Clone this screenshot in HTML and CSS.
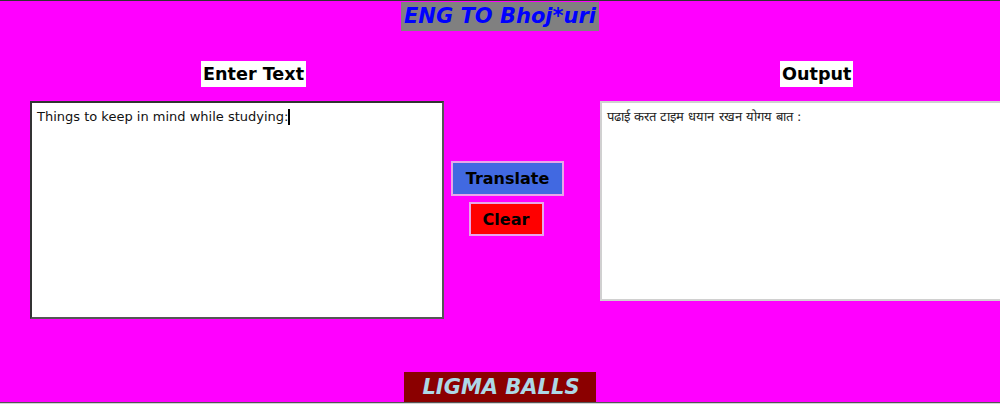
FILE: index.html
```html
<!DOCTYPE html>
<html lang="en">
<head>
<meta charset="utf-8">
<title>ENG TO Bhoj*uri</title>
<link rel="stylesheet" href="styles.css">
</head>
<body>
<div class="page">
  <header class="header">
    <h1 class="title">ENG TO Bhoj*uri</h1>
  </header>
  <div class="labels">
    <h2 class="label label-in">Enter Text</h2>
    <h2 class="label label-out">Output</h2>
  </div>
  <main class="row">
    <div class="input-box">Things to keep in mind while studying:<span class="caret"></span></div>
    <div class="buttons">
      <button class="btn btn-translate">Translate</button>
      <button class="btn btn-clear">Clear</button>
    </div>
    <div class="output-box">पढाई करत टाइम धयान रखन योगय बात :</div>
  </main>
  <footer class="footer">
    <p class="footer-text">LIGMA BALLS</p>
  </footer>
</div>
</body>
</html>
```
FILE: styles.css
```css
html {
  background: #d4d4d4;
}
body {
  margin: 0;
  font-family: "DejaVu Sans", sans-serif;
  overflow: hidden;
}
.page {
  background: #ff00ff;
  border-top: 1px solid #333;
  border-bottom: 1px solid #555;
  height: 401px;
  display: flex;
  flex-direction: column;
  overflow: hidden;
}
.header {
  display: flex;
  justify-content: center;
  padding-top: 1px;
}
.title {
  margin: 0;
  background: #808080;
  color: #0000ff;
  font-style: italic;
  font-weight: bold;
  font-size: 21px;
  line-height: 29px;
  padding: 0 3px;
}
.labels {
  display: flex;
  margin-top: 30px;
  padding-left: 201px;
}
.label {
  margin: 0;
  background: #ffffff;
  color: #000;
  font-size: 17.6px;
  font-weight: bold;
  line-height: 26px;
  padding: 0 2px;
}
.label-out {
  margin-left: 474px;
}
.row {
  display: flex;
  align-items: flex-start;
  margin-top: 14px;
  padding-left: 30px;
}
.input-box {
  box-sizing: border-box;
  width: 414px;
  height: 218px;
  background: #fff;
  border: 2px solid #333;
  border-right-color: #555;
  border-bottom-color: #555;
  padding: 5px 5px;
  font-size: 13px;
  line-height: 17px;
  color: #111;
  flex: none;
}
.caret {
  display: inline-block;
  width: 2px;
  height: 16px;
  background: #000;
  vertical-align: -4px;
}
.buttons {
  display: flex;
  flex-direction: column;
  align-items: center;
  gap: 6px;
  margin-left: 7px;
  margin-top: 60px;
  width: 113px;
  flex: none;
}
.btn {
  font-family: "DejaVu Sans", sans-serif;
  font-weight: bold;
  font-size: 16px;
  color: #000;
  border: 2px solid #e8a6e8;
  margin: 0;
  cursor: pointer;
}
.btn-translate {
  background: #4169e1;
  width: 113px;
  height: 35px;
  padding: 0;
}
.btn-clear {
  background: #ff0000;
  width: 75px;
  height: 34px;
  padding: 0;
  margin-right: 3px;
}
.output-box {
  box-sizing: border-box;
  width: 440px;
  height: 200px;
  margin-left: 36px;
  background: #fff;
  border: 2px solid #d0d0d0;
  padding: 5px 5px;
  font-size: 13px;
  line-height: 17px;
  color: #222;
  flex: none;
}
.footer {
  margin-top: auto;
  display: flex;
  justify-content: center;
}
.footer-text {
  margin: 0;
  background: #8b0000;
  color: #add8e6;
  font-style: italic;
  font-weight: bold;
  font-size: 21px;
  line-height: 30px;
  padding: 0 16px 0 18px;
}
```
